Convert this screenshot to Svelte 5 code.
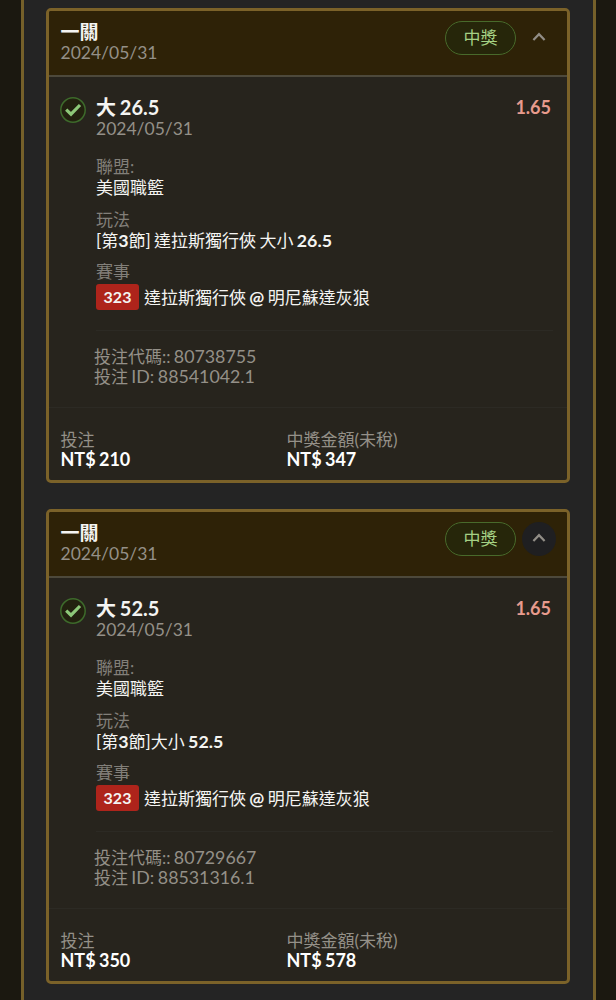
<script>

    // bets shown in the list
    let bets = [
        {
            title: '一關',
            date: '2024/05/31',
            status: '中獎',
            pick: '大 26.5',
            odds: '1.65',
            league: '美國職籃',
            market: '[第3節] 達拉斯獨行俠 大小 26.5',
            number: '323',
            game: '達拉斯獨行俠 @ 明尼蘇達灰狼',
            code: '80738755',
            id: '88541042.1',
            stake: 'NT$ 210',
            payout: 'NT$ 347',
            focused: false
        },
        {
            title: '一關',
            date: '2024/05/31',
            status: '中獎',
            pick: '大 52.5',
            odds: '1.65',
            league: '美國職籃',
            market: '[第3節]大小 52.5',
            number: '323',
            game: '達拉斯獨行俠 @ 明尼蘇達灰狼',
            code: '80729667',
            id: '88531316.1',
            stake: 'NT$ 350',
            payout: 'NT$ 578',
            focused: true
        }
    ];


    // helper function to split a text into latin and chinese runs
    function get_runs(text) {
        return text.split(/([@\d.]+)/).filter(run => run !== '');
    }

</script>

<main>
    <div class="panel">
        {#each bets as bet}
            <section class="card">

                <!-- Header -->
                <header>
                    <div>
                        <h2>{bet.title}</h2>
                        <p class="date">{bet.date}</p>
                    </div>
                    <span class="status">{bet.status}</span>
                    <button class:focused={bet.focused} aria-label="收合">
                        <svg width="14" height="10" viewBox="0 0 14 10"><path d="M1.4 8 L7 2.2 L12.6 8"/></svg>
                    </button>
                </header>

                <!-- Selection -->
                <div class="selection">
                    <svg class="check" width="26" height="26" viewBox="0 0 26 26">
                        <circle cx="13" cy="13" r="12.2"/>
                        <path d="M6.2 12.6 L11 17.2 L20 8"/>
                    </svg>
                    <div class="details">
                        <div class="pick">
                            <h3>{bet.pick}</h3>
                            <span class="odds">{bet.odds}</span>
                        </div>
                        <p class="date">{bet.date}</p>

                        <dl>
                            <dt>聯盟:</dt>
                            <dd>{bet.league}</dd>
                            <dt>玩法</dt>
                            <dd>{#each get_runs(bet.market) as run}<span class:latin={/[@\d]/.test(run)}>{run}</span>{/each}</dd>
                            <dt>賽事</dt>
                            <dd class="game">
                                <span class="number">{bet.number}</span>
                                <div>{#each get_runs(bet.game) as run}<span class:latin={/[@\d]/.test(run)}>{run}</span>{/each}</div>
                            </dd>
                        </dl>

                        <div class="codes">
                            <p>投注代碼:: <span>{bet.code}</span></p>
                            <p>投注 <span>ID: {bet.id}</span></p>
                        </div>
                    </div>
                </div>

                <!-- Totals -->
                <footer>
                    <div>
                        <p>投注</p>
                        <strong>{bet.stake}</strong>
                    </div>
                    <div>
                        <p>中獎金額(未稅)</p>
                        <strong>{bet.payout}</strong>
                    </div>
                </footer>

            </section>
        {/each}
    </div>
</main>

<style>

    :global(body) {
        margin: 0px;
        background-color: #1b1810;
    }

    main {
        box-sizing: border-box;
        height: 1000px;
        padding: 0px 20px 0px 21px;
        overflow: hidden;
        font-family: Lato, 'Noto Sans CJK TC', sans-serif;
        font-size: 17px;
        word-spacing: -1px;
        color: #f4f4f2;
    }

    h2, h3, p, dl, dd {
        margin: 0px;
    }

    .panel {
        box-sizing: border-box;
        height: 1000px;
        padding: 7.5px 23px 0px 22px;
        border: solid #75602a;
        border-width: 0px 3px;
        background-color: #242424;
    }

    .card {
        box-sizing: border-box;
        height: 475px;
        margin-bottom: 26.3px;
        border: 3px solid #7b6229;
        border-radius: 5px;
        background-color: #27241d;
        overflow: hidden;
    }

    header {
        display: flex;
        box-sizing: border-box;
        height: 66px;
        padding: 10px 12px 0px 11.5px;
        border-bottom: 2px solid #4d493b;
        background-color: #2e2207;
    }

    header > div {
        flex: 1;
    }

    h2 {
        font-size: 19px;
        line-height: 21px;
        font-weight: 700;
    }

    .date {
        font-size: 17.5px;
        line-height: 21px;
        color: #949088;
    }

    .status {
        box-sizing: border-box;
        width: 71px;
        height: 34px;
        margin-top: 0.5px;
        border: 1px solid #486a2b;
        border-radius: 17px;
        background-color: #26260a;
        color: #a5d184;
        line-height: 32px;
        text-align: center;
    }

    button {
        display: flex;
        align-items: center;
        justify-content: center;
        width: 34px;
        height: 34px;
        margin: 0px -1px 0px 6px;
        padding: 0px 0px 2px 0px;
        border: none;
        border-radius: 50%;
        background: none;
    }

    button.focused {
        background-color: #1f1f21;
    }

    button path {
        fill: none;
        stroke: #918d86;
        stroke-width: 2.2;
    }

    .selection {
        display: flex;
        padding: 19px 14px 0px 11px;
    }

    .check {
        flex: none;
        margin: 1px 10px 0px 0px;
    }

    .check circle {
        fill: #22210f;
        stroke: #3d6a2b;
        stroke-width: 1.5;
    }

    .check path {
        fill: none;
        stroke: #8dc878;
        stroke-width: 3.2;
    }

    .details {
        flex: 1;
    }

    .pick {
        display: flex;
        justify-content: space-between;
        height: 22px;
        padding-right: 2px;
        line-height: 22px;
    }

    h3 {
        font-size: 20px;
        font-weight: 700;
    }

    .odds {
        font-size: 18px;
        font-weight: 700;
        color: #e89b8d;
    }

    dl {
        height: 192px;
        box-sizing: border-box;
        padding-top: 17.5px;
        border-bottom: 1px solid #2c2a24;
    }

    dt {
        line-height: 21px;
        color: #827f79;
    }

    dd {
        margin-bottom: 10.5px;
        line-height: 21px;
    }

    .latin {
        font-size: 17.8px;
        font-weight: 700;
    }

    .game {
        display: flex;
        align-items: center;
        line-height: 26px;
    }

    .game div {
        white-space: pre;
    }

    .number {
        width: 43px;
        margin-top: 1px;
        margin-right: 5px;
        border-radius: 3px;
        background-color: #ae241b;
        font-size: 16px;
        font-weight: 700;
        text-align: center;
    }

    .game div {
        margin-top: 1.5px;
    }

    .codes {
        height: 76px;
        box-sizing: border-box;
        padding-top: 16.5px;
        margin-left: -2px;
        line-height: 19.5px;
        color: #949088;
    }

    .codes span {
        font-size: 17.8px;
    }

    footer {
        display: flex;
        padding: 22.5px 12px 0px 11.5px;
        border-top: 1px solid #2c2a24;
    }

    footer div {
        width: 226px;
        line-height: 19.5px;
    }

    footer p {
        color: #949088;
    }

    strong {
        display: block;
        font-size: 18px;
        font-weight: 700;
        color: #ffffff;
    }

</style>
